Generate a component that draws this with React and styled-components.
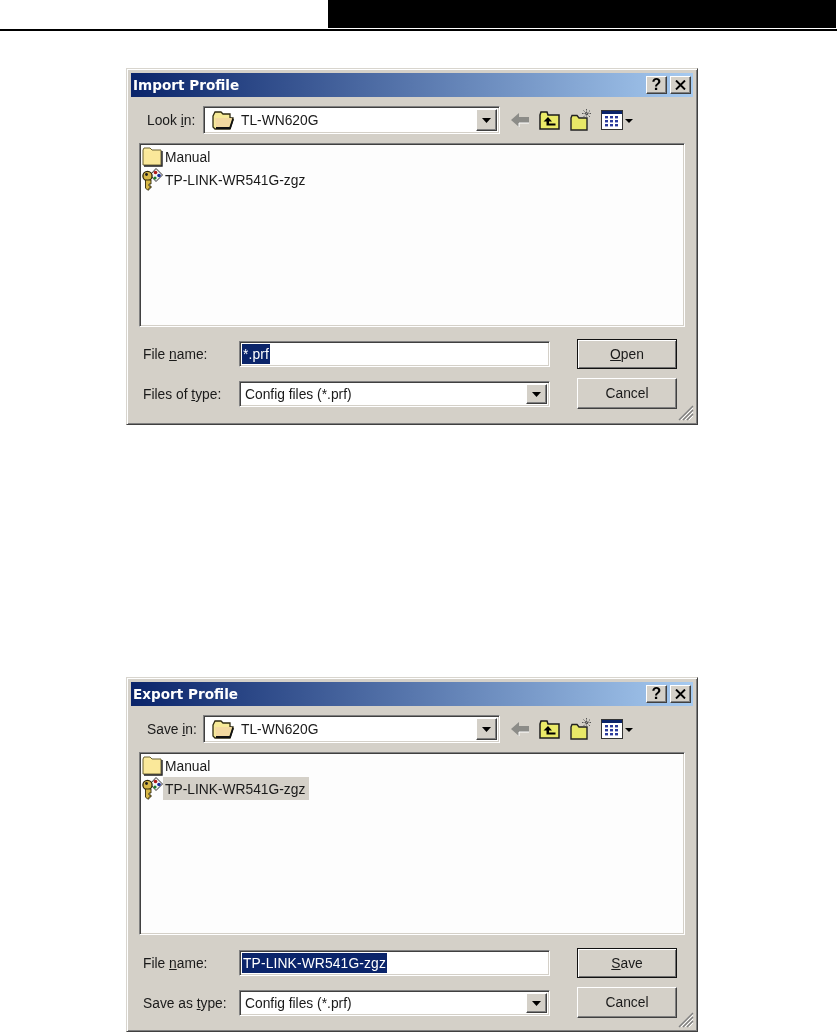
import styled, { createGlobalStyle } from "styled-components";

const GlobalStyle = createGlobalStyle`
  html, body {
    margin: 0;
    padding: 0;
    background: #fff;
  }
`;

const Page = styled.div`
  width: 837px;
  height: 1032px;
  overflow: hidden;
  background: #fff;
  font-family: "Liberation Sans", Arial, sans-serif;
  font-size: 13.8px;
  color: #1a1a1a;
`;

const TopBar = styled.div`
  display: flex;
  justify-content: flex-end;
  height: 29px;
  border-bottom: 2px solid #000;
  box-sizing: content-box;
`;

const BlackBlock = styled.div`
  width: 508px;
  height: 28px;
  margin-right: 1px;
  background: #000;
`;

const Window = styled.div`
  position: relative;
  box-sizing: border-box;
  width: 572px;
  height: ${(p) => p.$height}px;
  margin: ${(p) => p.$top}px 0 0 126px;
  padding: 5px 5px 0;
  background: #d4d0c8;
  border: 1px solid;
  border-color: #d8d5ce #404040 #404040 #d8d5ce;
  box-shadow: inset 1px 1px 0 #fff, inset -1px -1px 0 #808080;
  filter: blur(0.4px);
`;

const TitleBar = styled.div`
  display: flex;
  align-items: center;
  justify-content: space-between;
  height: 24px;
  margin: -1px -1px 0;
  padding: 0 2px;
  background: linear-gradient(90deg, #0a246a 0%, #a6caf0 100%);
`;

const TitleText = styled.div`
  font-family: "DejaVu Sans", Verdana, sans-serif;
  font-weight: 700;
  font-size: 13.6px;
  color: #fff;
`;

const TitleButtons = styled.div`
  display: flex;
  gap: 3px;
`;

const CaptionButton = styled.div`
  display: flex;
  align-items: center;
  justify-content: center;
  box-sizing: border-box;
  width: 21px;
  height: 18px;
  background: #d4d0c8;
  border: 1px solid;
  border-color: #fff #404040 #404040 #fff;
  box-shadow: inset -1px -1px 0 #808080;
  font-weight: 700;
  font-size: 16px;
  color: #000;
`;

const Toolbar = styled.div`
  display: flex;
  align-items: center;
  height: 28px;
  margin-top: 9px;
`;

const LookLabel = styled.div`
  box-sizing: border-box;
  width: 63px;
  margin-left: 8px;
  padding-left: 7px;
  white-space: nowrap;
`;

const Sunken = styled.div`
  box-sizing: border-box;
  background: #fff;
  border: 1px solid;
  border-color: #808080 #fff #fff #808080;
  box-shadow: inset 1px 1px 0 #404040, inset -1px -1px 0 #d4d0c8;
`;

const ComboBox = styled(Sunken)`
  display: flex;
  align-items: center;
  width: ${(p) => p.$width}px;
  height: ${(p) => p.$height}px;
  padding: 2px;
`;

const ComboValue = styled.div`
  display: flex;
  align-items: center;
  flex: 1;
  gap: 7px;
  padding-left: ${(p) => p.$pad}px;
`;

const DropButton = styled.div`
  display: flex;
  align-items: center;
  justify-content: center;
  box-sizing: border-box;
  width: 21px;
  height: 100%;
  background: #d4d0c8;
  border: 1px solid;
  border-color: #fff #404040 #404040 #fff;
  box-shadow: inset -1px -1px 0 #808080;
`;

const ToolIcons = styled.div`
  display: flex;
  align-items: center;
  margin-left: 11px;
`;

const ToolIcon = styled.div`
  display: flex;
  align-items: center;
  margin-right: ${(p) => p.$gap}px;
`;

const FileList = styled(Sunken)`
  width: 546px;
  height: ${(p) => p.$height}px;
  margin: 9px 0 0 7px;
  padding: 1px 2px;
  background: #fdfdfd;
`;

const FileRow = styled.div`
  display: flex;
  align-items: center;
  height: 23px;
`;

const FileName = styled.div`
  display: flex;
  align-items: center;
  box-sizing: border-box;
  height: 23px;
  padding: 2px 4px 0 2px;
  background: ${(p) => (p.$selected ? "#d4d0c8" : "transparent")};
`;

const FormArea = styled.div`
  display: flex;
  margin: ${(p) => p.$gap}px 0 0 7px;
`;

const Fields = styled.div`
  display: grid;
  grid-template-columns: 96px 311px;
  grid-auto-rows: 26px;
  row-gap: 14px;
  align-items: center;
  width: 407px;
  padding-left: 4px;
`;

const TextInput = styled(Sunken)`
  display: flex;
  align-items: center;
  height: 26px;
  padding: 0 2px;
`;

const Selected = styled.span`
  display: inline-flex;
  align-items: center;
  height: 20px;
  padding: 0 1px;
  letter-spacing: 0.15px;
  background: #0a246a;
  color: #fff;
`;

const Buttons = styled.div`
  display: flex;
  flex-direction: column;
  gap: 9px;
  margin: -2px 0 0 27px;
`;

const Button = styled.div`
  display: flex;
  align-items: center;
  justify-content: center;
  box-sizing: border-box;
  width: 100px;
  height: ${(p) => (p.$primary ? 30 : 31)}px;
  background: #d4d0c8;
  border: 1px solid;
  border-color: ${(p) => (p.$primary ? "#111" : "#fff #404040 #404040 #fff")};
  box-shadow: ${(p) =>
    p.$primary
      ? "inset 1px 1px 0 #fff, inset -1px -1px 0 #707070"
      : "inset -1px -1px 0 #808080"};
`;

const Grip = styled.svg`
  position: absolute;
  right: 3px;
  bottom: 3px;
`;

const OpenFolder = () => (
  <svg width="22" height="20" viewBox="0 0 22 20" style={{ flex: "none" }}>
    <path d="M1 6 L3 2 H9 L11 4 H18 V8 H21 V10 L18 19 H3 L1 17 Z" fill="#f6ea98" stroke="#2e2a10" strokeWidth="1.3" />
    <path d="M3 8 H20 L17 17 H4 Z" fill="#f3d9a0" />
    <path d="M4 18 H18 L21 9" fill="none" stroke="#111" strokeWidth="1.8" />
  </svg>
);

const ClosedFolder = () => (
  <svg width="21" height="21" viewBox="0 0 21 21" style={{ flex: "none" }}>
    <path d="M1 4 L2 2 H8 L10 4 H19 V19 H1 Z" fill="#fcec9e" stroke="#6a6030" strokeWidth="1" />
    <path d="M2 5 H18 V18 H2 Z" fill="#fae89a" />
    <path d="M20 5 V20 H2" fill="none" stroke="#1c1c1c" strokeWidth="1.4" />
  </svg>
);

const KeyIcon = () => (
  <svg width="21" height="23" viewBox="0 0 21 23" style={{ flex: "none" }}>
    <path d="M14 0.5 L20.5 7 L14 13.5 L8 7 Z" fill="#f4f4f4" stroke="#333" strokeWidth="1" />
    <circle cx="13.5" cy="4.5" r="1.8" fill="#b01818" />
    <circle cx="17" cy="7.5" r="1.8" fill="#1c2f9c" />
    <circle cx="13" cy="10" r="1.6" fill="#1c7a2c" />
    <circle cx="5.5" cy="8" r="4.6" fill="#d8b848" stroke="#2e2608" strokeWidth="1.3" />
    <circle cx="4.5" cy="6.5" r="1.4" fill="#1c1c1c" />
    <path d="M3.5 12 V20 L5.5 22 H7 V20 H9 V18 H7 V16 H9 V12 Z" fill="#d8b848" stroke="#2e2608" strokeWidth="0.9" />
  </svg>
);

const BackArrow = () => (
  <svg width="18" height="16" viewBox="0 0 18 16">
    <path d="M0 8 L8 1 V5 H18 V11 H8 V15 Z" fill="#8c8c88" />
    <path d="M8 15 V11 H18" fill="none" stroke="#fff" strokeWidth="1" />
  </svg>
);

const UpFolder = () => (
  <svg width="21" height="19" viewBox="0 0 21 19">
    <path d="M1 4 L2 1 H8 L9 4 H20 V18 H1 Z" fill="#eaea68" stroke="#1c1c1c" strokeWidth="1.5" />
    <path d="M9 6 L4.5 10.5 H7.5 V14.5 H16.5 V12.5 H10 V10.5 H13 Z" fill="#000" />
  </svg>
);

const NewFolder = () => (
  <svg width="22" height="22" viewBox="0 0 22 22">
    <path d="M1 9 L2 6.5 H7 L9 9 H17 V21 H1 Z" fill="#e8e868" stroke="#222" strokeWidth="1.4" />
    <path d="M16.5 0 V9 M12 4.5 H21.5 M13.5 1.5 L20 8 M20 1.5 L13.5 8" stroke="#555" strokeWidth="1" strokeDasharray="1.5 1" />
  </svg>
);

const ViewMenu = () => (
  <svg width="33" height="20" viewBox="0 0 33 20">
    <rect x="0.5" y="0.5" width="21" height="19" fill="#fff" stroke="#333" />
    <rect x="1" y="1" width="20" height="3" fill="#0a246a" />
    {[4, 9, 14].map((x) =>
      [6, 10, 14].map((y) => (
        <rect key={`${x}-${y}`} x={x} y={y} width="3" height="2.4" fill="#2a3a9c" />
      ))
    )}
    <path d="M24 9 H32 L28 13 Z" fill="#000" />
  </svg>
);

const Caret = () => (
  <svg width="9" height="5" viewBox="0 0 9 5">
    <path d="M0 0 H9 L4.5 5 Z" fill="#000" />
  </svg>
);

function Dialog({ title, top, height, listHeight, formGap, lookLabel, typeLabel, nameValue, action, selectFile }) {
  return (
    <Window $top={top} $height={height}>
      <TitleBar>
        <TitleText>{title}</TitleText>
        <TitleButtons>
          <CaptionButton>?</CaptionButton>
          <CaptionButton>
            <svg width="11" height="10" viewBox="0 0 11 10">
              <path d="M1 0.5 L10 9.5 M10 0.5 L1 9.5" stroke="#000" strokeWidth="1.9" />
            </svg>
          </CaptionButton>
        </TitleButtons>
      </TitleBar>
      <Toolbar>
        <LookLabel>{lookLabel}</LookLabel>
        <ComboBox $width={297} $height={28}>
          <ComboValue $pad={6}>
            <OpenFolder />
            TL-WN620G
          </ComboValue>
          <DropButton>
            <Caret />
          </DropButton>
        </ComboBox>
        <ToolIcons>
          <ToolIcon $gap={10}><BackArrow /></ToolIcon>
          <ToolIcon $gap={10}><UpFolder /></ToolIcon>
          <ToolIcon $gap={9}><NewFolder /></ToolIcon>
          <ToolIcon $gap={0}><ViewMenu /></ToolIcon>
        </ToolIcons>
      </Toolbar>
      <FileList $height={listHeight}>
        <FileRow>
          <ClosedFolder />
          <FileName>Manual</FileName>
        </FileRow>
        <FileRow>
          <KeyIcon />
          <FileName $selected={selectFile}>TP-LINK-WR541G-zgz</FileName>
        </FileRow>
      </FileList>
      <FormArea $gap={formGap}>
        <Fields>
          <div>File <u>n</u>ame:</div>
          <TextInput>
            <Selected>{nameValue}</Selected>
          </TextInput>
          <div>{typeLabel}</div>
          <ComboBox $width={311} $height={26}>
            <ComboValue $pad={3}>Config files (*.prf)</ComboValue>
            <DropButton>
              <Caret />
            </DropButton>
          </ComboBox>
        </Fields>
        <Buttons>
          <Button $primary>{action}</Button>
          <Button>Cancel</Button>
        </Buttons>
      </FormArea>
      <Grip width="16" height="16" viewBox="0 0 16 16">
        <path d="M15 1 L1 15 M15 5 L5 15 M15 9 L9 15" stroke="#808080" strokeWidth="1.4" />
        <path d="M15 3 L3 15 M15 7 L7 15 M15 11 L11 15" stroke="#fff" strokeWidth="1" />
      </Grip>
    </Window>
  );
}

export default function App() {
  return (
    <Page>
      <GlobalStyle />
      <TopBar>
        <BlackBlock />
      </TopBar>
      <Dialog
        title="Import Profile"
        top={37}
        height={357}
        listHeight={184}
        formGap={14}
        lookLabel={<>Look <u>i</u>n:</>}
        typeLabel={<>Files of <u>t</u>ype:</>}
        nameValue="*.prf"
        action={<><u>O</u>pen</>}
      />
      <Dialog
        title="Export Profile"
        top={252}
        height={355}
        listHeight={183}
        formGap={15}
        lookLabel={<>Save <u>i</u>n:</>}
        typeLabel={<>Save as <u>t</u>ype:</>}
        nameValue="TP-LINK-WR541G-zgz"
        action={<><u>S</u>ave</>}
        selectFile
      />
    </Page>
  );
}
